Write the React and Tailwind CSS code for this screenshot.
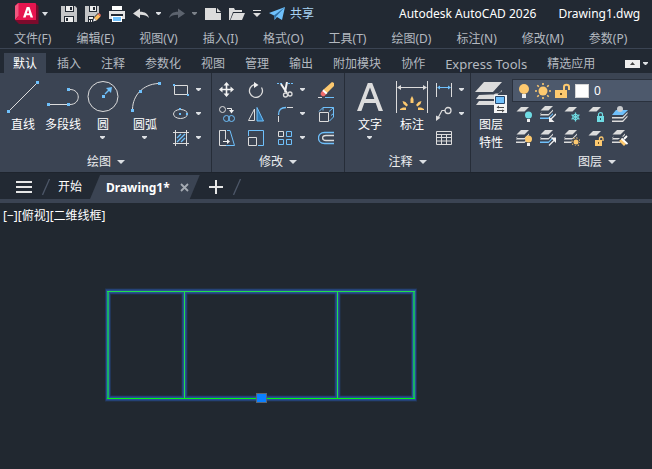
import React from "react";

const W = "#dcdcdc";
const B = "#6fc0fb";
const Y = "#fdc96f";
const T = "#6fdbe3";

function Svg({ w = 16, h = 16, children }) {
  return (
    <svg width={w} height={h} viewBox={`0 0 ${w} ${h}`} fill="none" aria-hidden="true" className="shrink-0">
      {children}
    </svg>
  );
}

function Caret({ big, dim }) {
  return big ? (
    <Svg w={8} h={4}>
      <path d="M0 0h8L4 4z" fill="#dcdfe3" />
    </Svg>
  ) : (
    <Svg w={6} h={4}>
      <path d="M0 0h5v1L3 3H2L0 1z" fill={dim ? "#7c828a" : "#dcdfe3"} />
    </Svg>
  );
}

/* ---------- quick access icons ---------- */

const Logo = () => (
  <Svg w={24} h={22}>
    <path d="M3 0h17a1 1 0 0 1 1 1v16H0V3z" fill="#e6154f" />
    <path d="M0 3 3.500 0v13L0 17z" fill="#f0577f" />
    <path d="M3.500 13 0 17l4 4h19.500V3L21 1v16H3.500z" fill="#7c0b2c" />
    <path d="M0 17 3.500 13H21v4z" fill="#e6154f" />
    <path d="M8 14.500 11.700 4h2.800l3.600 10.500h-2.600l-.7-2.300h-3.500l-.7 2.300zM11.900 10.300h2.300L13.100 6.500z" fill="#fff" />
  </Svg>
);
const Save = () => (
  <Svg>
    <path d="M0 0h14l2 2v14H0z" fill="#c4c5c7" />
    <path d="M4 0h9v6H4z" fill="#222933" />
    <path d="M5 0h7v5H5z" fill="#eee" />
    <path d="M9 1h2v3H9z" fill="#222933" />
    <path d="M3 10h10v6H3z" fill="#222933" />
    <path d="M4 11h8v5H4z" fill="#eee" />
    <path d="M5 12h2v3H5z" fill="#222933" />
  </Svg>
);
const SaveAs = () => (
  <Svg>
    <path d="M0 0h14v7l-6 6v3H0z" fill="#c4c5c7" />
    <path d="M4 0h8v6H4z" fill="#222933" />
    <path d="M5 0h6v5H5z" fill="#eee" />
    <path d="M8 1h2v3H8z" fill="#222933" />
    <path d="M3 10h6v6H3z" fill="#222933" />
    <path d="M4 11h4v2H4zM4 14h1v2H4zM6 14h1v2H6z" fill="#eee" />
    <path d="m7 16 1-4 5-5 3 3-5 5z" fill="#222933" />
    <path d="m9 12 4-4 2.500 2.500-4 4z" fill="#fdbd60" />
    <path d="m13 8 1-1 2 2-.8 1.500z" fill="#ef6a60" />
    <path d="m9 12 2.500 2.500L8 15.500z" fill="#eee" />
  </Svg>
);
const Print = () => (
  <Svg>
    <path d="M3 0h10v4H3z" fill="#fff" />
    <path d="M0 5h16v8H0z" fill="#e4e4e4" />
    <path d="M2 8h12v2H2z" fill="#222933" />
    <path d="M3 10h10v6H3z" fill="#fff" />
    <path d="M4 11h8v4H4z" fill="#6fc0fb" />
  </Svg>
);
const Undo = ({ flip, color }) => (
  <Svg>
    <g transform={flip ? "translate(16 0) scale(-1 1)" : undefined}>
      <path d="M0 7.500 7 2.500v3.200c5 0 8 2 9 6.300-2-2.500-4.500-3.200-9-3.200v3.500z" fill={color} />
    </g>
  </Svg>
);
const NewFile = () => (
  <Svg>
    <path d="M0 2h11v5h5v7H0z" fill="#dcdcdc" />
    <path d="m12 2 4 4h-4z" fill="#dcdcdc" />
  </Svg>
);
const Open = () => (
  <Svg>
    <path d="M0 2h5l1 2h7v2H4L1 14H0z" fill="#dcdcdc" />
    <path d="M4.500 7H16l-3 7H1.500z" fill="#dcdcdc" />
  </Svg>
);
const MoreTools = () => (
  <Svg w={8} h={8}>
    <path d="M0 0h8v1H0zM0 3h8L4 7z" fill="#dcdcdc" />
  </Svg>
);
const Send = () => (
  <Svg>
    <path d="M0 7 16 1 13 14 8 11 5.500 14 5 9.500z" fill={B} />
    <path d="M16 1 5 9.500l.5 4.500L7 10.500z" fill="#2c6da3" />
  </Svg>
);

/* ---------- draw panel ---------- */

const Sq = ({ x, y, s = 3, c = B }) => <rect x={x} y={y} width={s} height={s} fill={c} />;

const LineIcon = () => (
  <Svg w={32} h={32}>
    <path d="M3 29 29 3" stroke={W} />
    <Sq x={0} y={29} />
    <Sq x={29} y={0} />
  </Svg>
);
const PolyIcon = () => (
  <Svg w={32} h={32}>
    <path d="M3 23.500h17M23 8.500c11 0 11 15 0 15" stroke={W} />
    <Sq x={0} y={22} />
    <Sq x={20} y={22} />
    <Sq x={20} y={7} />
  </Svg>
);
const CircleIcon = () => (
  <Svg w={32} h={32}>
    <circle cx="16" cy="15.500" r="15" stroke={W} />
    <Sq x={15} y={14} />
    <path d="m18 13 4-4" stroke={B} strokeWidth="1.500" />
    <path d="m25 6-1 6-2-2-3-3z" fill={B} />
  </Svg>
);
const ArcIcon = () => (
  <Svg w={32} h={32}>
    <path d="M3.500 28C4 14 14 3.500 29 2.500" stroke={W} />
    <Sq x={2} y={28} />
    <Sq x={10} y={9} />
    <Sq x={29} y={1} />
  </Svg>
);
const RectIcon = () => (
  <Svg>
    <path d="M1.500 3.500h13v9h-13z" stroke={W} />
    <Sq x={0} y={2} s={2} />
    <Sq x={14} y={12} s={2} />
  </Svg>
);
const EllipseIcon = () => (
  <Svg>
    <ellipse cx="7.500" cy="8" rx="7" ry="4.500" stroke={W} />
    <Sq x={6} y={2} s={2} />
    <Sq x={6} y={7} s={2} />
    <Sq x={13} y={7} s={2} />
  </Svg>
);
const HatchIcon = () => (
  <Svg>
    <path d="M2.500 0v16M13.500 0v16M0 2.500h16M0 13.500h16" stroke={W} />
    <path d="m4 8 4-4M4 12l8-8M8 12l4-4" stroke={B} strokeWidth="1.300" />
  </Svg>
);

/* ---------- modify panel ---------- */

const MoveIcon = () => (
  <Svg>
    <path d="M7.500 2v11M2 7.500h11" stroke="#f2f2f2" strokeWidth="1.600" />
    <path d="M7.500 0l3 3.500h-6zM7.500 15l3-3.500h-6zM0 7.500l3.500-3v6zM15 7.500l-3.500-3v6z" fill="#f2f2f2" />
  </Svg>
);
const RotateIcon = () => (
  <Svg>
    <path d="M13.500 5.500A6.500 6.500 0 1 1 6 2.700" stroke={W} strokeWidth="1.300" />
    <path d="M6 0v6l4.500-3z" fill="#f2f2f2" />
  </Svg>
);
const TrimIcon = () => (
  <Svg>
    <path d="M0 1.500h6M11 1.500h5" stroke={B} strokeDasharray="2 1" />
    <path d="m4 2 6 9M10 0 8 10" stroke="#f2f2f2" strokeWidth="2" />
    <circle cx="8.500" cy="13" r="2" stroke={W} strokeWidth="1.300" />
    <circle cx="13" cy="12" r="2" stroke={W} strokeWidth="1.300" />
  </Svg>
);
const EraseIcon = () => (
  <Svg>
    <path d="M5 8 14 0l2 1v3L8 12z" fill={Y} />
    <path d="m4.500 8.500 4 3.500-2 2c-2 1-5-1-3.500-3.500z" fill="#f06a6a" />
    <path d="m5.500 7.500 4 3.500-1.500 1.200-3.700-3.200z" fill="#fff" />
    <path d="M0 15.500h4" stroke={W} />
    <path d="M7 15.500h9" stroke={B} />
  </Svg>
);
const CopyIcon = () => (
  <Svg>
    <circle cx="3.500" cy="3.500" r="3" stroke={W} />
    <path d="M8 2.500h4.500V5" stroke="#f2f2f2" />
    <path d="M10 4h5l-2.500 3.500z" fill="#f2f2f2" />
    <circle cx="7.500" cy="12.500" r="3" stroke={B} />
    <circle cx="12.500" cy="12.500" r="3" stroke={B} />
  </Svg>
);
const MirrorIcon = () => (
  <Svg>
    <path d="M6.500 3v11.500h-6z" stroke={W} />
    <path d="M9 1.500 15.500 15H9z" fill="#2f78b0" stroke={B} />
  </Svg>
);
const FilletIcon = () => (
  <Svg>
    <path d="M1.500 9C1.500 4 4 1.500 9 1.500" stroke={B} strokeWidth="1.300" />
    <path d="M10 1.500h6M1.500 10v6" stroke={W} />
  </Svg>
);
const BoxIcon = () => (
  <Svg>
    <path d="M1 5.500 5 1.500h10.500V11l-4 4M5 1.500v3M11 5.500l4.500-4M13 9.500l2.500-2" stroke={B} />
    <path d="M1.500 6.500h9v9h-9z" stroke={W} />
  </Svg>
);
const StretchIcon = () => (
  <Svg>
    <path d="M7 .5H.5v15H7M6.500.5v9" stroke={W} />
    <path d="M8 .5h3l4.500 15H7" stroke={B} />
    <path d="M4 11.500h5" stroke="#f2f2f2" />
    <path d="m8 9 3 2.500L8 14z" fill="#f2f2f2" />
  </Svg>
);
const ScaleIcon = () => (
  <Svg>
    <path d="M.5 6V.5h15v15H10" stroke={B} />
    <path d="M.5 7.500h8v8h-8z" stroke={W} />
  </Svg>
);
const ArrayIcon = () => (
  <Svg>
    <path d="M1.500 1.500h5v5h-5z" stroke={W} />
    <path d="M9.500 1.500h5v5h-5zM1.500 9.500h5v5h-5zM9.500 9.500h5v5h-5z" stroke={B} />
  </Svg>
);
const OffsetIcon = () => (
  <Svg>
    <path d="M16 2.500H6.500C-1.500 2.500-1.500 13.500 6.500 13.500H16" stroke={B} strokeWidth="1.300" />
    <path d="M16 5.500H8C3.500 5.500 3.500 10.500 8 10.500H16" stroke={W} strokeWidth="1.300" />
  </Svg>
);

/* ---------- annotate panel ---------- */

const TextIcon = () => (
  <Svg w={26} h={32}>
    <path d="M0 30 10.800 2h4.400L26 30h-4.400l-2.900-8H7.300l-2.900 8zM8.700 18h8.600L13 6.500z" fill={W} />
  </Svg>
);
const DimIcon = () => (
  <Svg w={32} h={32}>
    <path d="M.5 0v32M31.500 0v32M3 6.500h26" stroke={W} />
    <path d="m1 6.500 4-2.500v5zM31 6.500 27 4v5z" fill={W} />
    <path
      d="m16 15 1.500 3v4h-3v-4zM6.500 20l3 1 2.500 3-1.500 1.500-3-2.500zM25.500 20l-3 1-2.500 3 1.500 1.500 3-2.500zM4 28l3-1.500h3V29H4zM28 28l-3-1.500h-3V29h6z"
      fill={Y}
    />
  </Svg>
);
const LinearIcon = () => (
  <Svg>
    <path d="M.5 1v14M15.500 1v14" stroke={W} />
    <path d="M2 5.500h12" stroke={B} />
    <path d="m1 5.500 3-2v4zM15 5.500l-3-2v4z" fill={B} />
  </Svg>
);
const LeaderIcon = () => (
  <Svg>
    <circle cx="12" cy="4.500" r="3" stroke={W} strokeWidth="1.300" />
    <path d="M9 4.500H6L2 12" stroke={W} strokeWidth="1.200" />
    <path d="M0 15V9.500l4.500 2.300z" fill={W} />
  </Svg>
);
const TableIcon = () => (
  <Svg>
    <path d="M.5 1.500h15v13H.5zM0 4.500h16M0 7.500h16M0 11h16M5.500 5v9M10.500 5v9" stroke={W} />
  </Svg>
);

/* ---------- layer panel ---------- */

const Sheet = ({ y = 0, c = W }) => <path d={`M5 ${y}h8l-4.500 4.500h-8z`} fill={c} />;
const Stack = ({ last = W }) => (
  <>
    <Sheet y={0} />
    <path d="m2 6-2 2h8.500L13 3.500V5L8.500 9.500H0" fill={W} />
    <path d="m2 9.500-2 2h8.500L13 7v1.500L8.500 13H0v-1.500" fill={last} />
  </>
);
const Bulb = ({ c }) => (
  <>
    <circle cx="12.500" cy="9" r="3.500" fill={c} />
    <path d="M11 13h3v3h-3z" fill="#eee" />
  </>
);
const LayerOff = () => (
  <Svg>
    <Sheet y={1} />
    <Bulb c={T} />
  </Svg>
);
const LayerIso = () => (
  <Svg>
    <Stack last={B} />
    <path d="m16 8-5 5" stroke="#f2f2f2" strokeWidth="1.300" />
    <path d="M9 10.500V16h5.500z" fill="#f2f2f2" />
  </Svg>
);
const LayerFreeze = () => (
  <Svg>
    <Sheet y={1} />
    <path d="M11.500 6.500v9M7.500 8.700l8 4.600M15.500 8.700l-8 4.600" stroke={T} strokeWidth="1.300" />
    <circle cx="11.500" cy="11" r="2.800" stroke={T} />
  </Svg>
);
const LayerLock = () => (
  <Svg>
    <Sheet y={1} />
    <path d="M9 10h7v6H9z" fill={T} />
    <path d="M10.500 10V8.500c0-2.500 4-2.500 4 0V10" stroke={T} strokeWidth="1.200" />
    <path d="M12 12h1v2h-1z" fill="#24505a" />
  </Svg>
);
const LayerCurrent = () => (
  <Svg>
    <path d="M4 4h12l-5 5H0z" fill={B} />
    <path d="M0 11h10.500L15.500 6v1.500l-4.500 5H0zM0 14.500h10.500l5-5V11L11 16H0z" fill={W} />
    <circle cx="8" cy="3" r="3" fill="#c9cbce" />
  </Svg>
);
const LayerOn = () => (
  <Svg>
    <Stack />
    <Bulb c={Y} />
  </Svg>
);
const LayerUniso = () => (
  <Svg>
    <Stack last={B} />
    <path d="m9 15.500 5-5" stroke="#f2f2f2" strokeWidth="1.300" />
    <path d="M16 13V7.500h-5.500z" fill="#f2f2f2" />
  </Svg>
);
const LayerThaw = () => (
  <Svg>
    <Stack />
    <circle cx="12" cy="12" r="4.500" fill="#3b4453" />
    <circle cx="12" cy="12" r="2.500" fill={Y} />
    <circle cx="12" cy="12" r="4" stroke={Y} strokeWidth="1.200" strokeDasharray="1.100 2.040" />
  </Svg>
);
const LayerUnlock = () => (
  <Svg>
    <Sheet y={1} />
    <path d="M7 10h7v6H7z" fill={Y} />
    <path d="M11.500 10V8.500c0-2 3.500-2 3.500 0V11" stroke={Y} strokeWidth="1.300" />
    <path d="M10 12h1v2h-1z" fill="#6b5126" />
  </Svg>
);
const LayerMatch = () => (
  <Svg>
    <Stack />
    <path d="m6 10 4-4 6 6-4 4z" fill="#3b4453" />
    <path d="m7 11 3-2.500 5 4.500-3 3z" fill={Y} />
    <path d="m9.500 8.500 6 5.500M12 9l3-3" stroke="#fff" strokeWidth="1.800" />
  </Svg>
);
const LayerPropsIcon = () => (
  <Svg w={32} h={32}>
    <path d="M9 1h18L18 11H0z" fill={W} />
    <path d="m4 14-3 4h18l8-9v3" fill={W} />
    <path d="m4 20-3 4h18l8-9v3" fill={W} />
    <path d="M0 12.500h18.500L27 3.500" stroke="#3b4453" strokeWidth="2" />
    <path d="M0 19h19.500L27 11" stroke="#3b4453" strokeWidth="2" />
    <path d="M19 14h13v18H19z" fill="#f4f4f4" />
    <path d="M20.500 15.500h9v7h-9z" fill={B} stroke="#26466b" />
    <path d="M22 26.500h7M22 29.500h7" stroke="#4a4a4a" />
    <path d="m24 24.500-2.500 2 2.500 1zM27 31.500l2.500-2-2.500-1z" fill="#4a4a4a" />
  </Svg>
);

/* ---------- building blocks ---------- */

function Tool({ name, icon: Icon }) {
  return (
    <button type="button" aria-label={name} className="flex h-6 w-6 shrink-0 items-center justify-center">
      <Icon />
    </button>
  );
}

function Drop({ name, wide, dim }) {
  return (
    <button
      type="button"
      aria-label={name}
      className={wide ? "flex h-6 w-4 shrink-0 items-center justify-center" : "flex h-6 w-3 shrink-0 items-center justify-center"}
    >
      {wide ? <MoreTools /> : <Caret dim={dim} />}
    </button>
  );
}

function BigTool({ label, icon: Icon, drop, wide }) {
  return (
    <button
      type="button"
      className={wide ? "flex h-[72px] w-10 shrink-0 flex-col items-center pt-[3px]" : "flex h-[72px] w-9 shrink-0 flex-col items-center pt-[3px]"}
    >
      <Icon />
      <span className="whitespace-pre-line pt-[3px] text-center leading-[18px] text-white">{label}</span>
      {drop && (
        <span className="pt-0.5">
          <Caret />
        </span>
      )}
    </button>
  );
}

function Panel({ title, last, children }) {
  return (
    <section
      className={
        last
          ? "flex w-[252px] shrink-0 flex-col pt-[5px]"
          : "flex shrink-0 flex-col border-r border-[#262d38] pt-[5px]"
      }
    >
      <div className="flex h-[72px]">{children}</div>
      <button type="button" className="flex h-[22px] items-center justify-center gap-1.5 pt-0.5 leading-5 text-[#eceef0]">
        {title}
        <Caret big />
      </button>
    </section>
  );
}

const menus = ["文件(F)", "编辑(E)", "视图(V)", "插入(I)", "格式(O)", "工具(T)", "绘图(D)", "标注(N)", "修改(M)", "参数(P)"];
const tabs = ["插入", "注释", "参数化", "视图", "管理", "输出", "附加模块", "协作", "Express Tools", "精选应用"];

function TitleBar() {
  return (
    <header className="flex h-7 items-center whitespace-nowrap pl-[15px]">
      <button type="button" aria-label="A" className="shrink-0">
        <Logo />
      </button>
      <button type="button" aria-label="应用程序菜单" className="flex h-6 w-3 shrink-0 items-center justify-center">
        <Svg w={6} h={4}>
          <path d="M0 0h6L3 4z" fill="#dcdfe3" />
        </Svg>
      </button>
      <div className="flex items-center pl-1.5">
        <Tool name="保存" icon={Save} />
        <Tool name="另存为" icon={SaveAs} />
        <Tool name="打印" icon={Print} />
        <Tool name="放弃" icon={() => <Undo color="#dcdcdc" />} />
        <Drop name="放弃列表" />
        <Tool name="重做" icon={() => <Undo flip color="#5c636e" />} />
        <Drop name="重做列表" dim />
        <Tool name="新建" icon={NewFile} />
        <Tool name="打开" icon={Open} />
        <Drop name="自定义" wide />
        <button type="button" className="flex items-center gap-[5px] pl-1 text-[#a9d4f5]">
          <Send />
          共享
        </button>
      </div>
      <h1 className="flex gap-[22px] pl-[85px] text-[12px] text-white">
        <span>Autodesk AutoCAD 2026</span>
        <span>Drawing1.dwg</span>
      </h1>
    </header>
  );
}

function Ribbon() {
  return (
    <div className="flex h-[99px] bg-[#3b4453] pl-px">
      <Panel title="绘图">
        <div className="flex gap-1 pl-1">
          <BigTool label="直线" icon={LineIcon} />
          <BigTool label="多段线" icon={PolyIcon} />
          <BigTool label="圆" icon={CircleIcon} drop />
          <BigTool label="圆弧" icon={ArcIcon} drop wide />
        </div>
        <div className="grid grid-cols-[24px_12px] pr-1.5 pl-1">
          <Tool name="矩形" icon={RectIcon} />
          <Drop name="矩形列表" />
          <Tool name="椭圆" icon={EllipseIcon} />
          <Drop name="椭圆列表" />
          <Tool name="图案填充" icon={HatchIcon} />
          <Drop name="图案填充列表" />
        </div>
      </Panel>

      <Panel title="修改">
        <div className="grid grid-cols-[29px_29px_24px_17px_24px] pr-1.5 pl-[3px]">
          <Tool name="移动" icon={MoveIcon} />
          <Tool name="旋转" icon={RotateIcon} />
          <Tool name="修剪" icon={TrimIcon} />
          <Drop name="修剪列表" />
          <Tool name="删除" icon={EraseIcon} />
          <Tool name="复制" icon={CopyIcon} />
          <Tool name="镜像" icon={MirrorIcon} />
          <Tool name="圆角" icon={FilletIcon} />
          <Drop name="圆角列表" />
          <Tool name="分解" icon={BoxIcon} />
          <Tool name="拉伸" icon={StretchIcon} />
          <Tool name="缩放" icon={ScaleIcon} />
          <Tool name="阵列" icon={ArrayIcon} />
          <Drop name="阵列列表" />
          <Tool name="偏移" icon={OffsetIcon} />
        </div>
      </Panel>

      <Panel title="注释">
        <div className="flex gap-1 pl-[7px]">
          <BigTool label="文字" icon={TextIcon} drop />
          <BigTool label="标注" icon={DimIcon} wide />
        </div>
        <div className="grid grid-cols-[24px_12px] pr-0.5">
          <Tool name="线性" icon={LinearIcon} />
          <Drop name="线性列表" />
          <Tool name="引线" icon={LeaderIcon} />
          <Drop name="引线列表" />
          <Tool name="表格" icon={TableIcon} />
        </div>
      </Panel>

      <Panel title="图层" last>
        <BigTool label={"图层\n特性"} icon={LayerPropsIcon} wide />
        <div className="flex-1 pl-px pt-px">
          <div className="flex h-[23px] items-center border border-[#2a313d] bg-[#4d596c] pl-1.5">
            <Svg w={10} h={16}>
              <circle cx="5" cy="6" r="5" fill={Y} />
              <path d="M3 11h4v4H3z" fill="#eee" />
            </Svg>
            <div className="pl-1.5">
              <Svg>
                <circle cx="8" cy="8" r="4.500" fill={Y} />
                <path
                  d="M8 0v2M8 14v2M0 8h2M14 8h2M2.300 2.300l1.500 1.500M12.200 12.200l1.500 1.500M2.300 13.700l1.500-1.500M12.200 3.800l1.500-1.500"
                  stroke={Y}
                  strokeWidth="1.600"
                />
              </Svg>
            </div>
            <div className="pl-1">
              <Svg>
                <path d="M0 7h12v8H0z" fill={Y} />
                <path d="M9 7V4c0-3 5-3 5 0v3" stroke={Y} strokeWidth="2" />
                <path d="M5 10h2v2H5z" fill="#6b5126" />
              </Svg>
            </div>
            <span className="ml-1 h-[14px] w-[14px] shrink-0 border border-[#d5d5d5] bg-white" />
            <select
              aria-label="图层"
              defaultValue="0"
              className="ml-[5px] flex-1 appearance-none bg-transparent text-[12px] text-white outline-none"
            >
              <option value="0">0</option>
            </select>
          </div>
          <div className="grid grid-cols-[repeat(5,24px)]">
            <Tool name="关" icon={LayerOff} />
            <Tool name="隔离" icon={LayerIso} />
            <Tool name="冻结" icon={LayerFreeze} />
            <Tool name="锁定" icon={LayerLock} />
            <Tool name="置为当前" icon={LayerCurrent} />
            <Tool name="打开所有图层" icon={LayerOn} />
            <Tool name="取消隔离" icon={LayerUniso} />
            <Tool name="解冻" icon={LayerThaw} />
            <Tool name="解锁" icon={LayerUnlock} />
            <Tool name="匹配图层" icon={LayerMatch} />
          </div>
        </div>
      </Panel>
    </div>
  );
}

const Slash = () => (
  <Svg w={8} h={16}>
    <path d="M.5 16 7.500 0" stroke="#4d5768" strokeWidth="1.300" />
  </Svg>
);

function FileTabs() {
  return (
    <nav className="flex h-[27px] items-end border-t border-[#1e242d] pl-4">
      <button type="button" aria-label="菜单" className="flex h-6 items-center">
        <Svg w={16} h={12}>
          <path d="M0 1h16M0 6h16M0 11h16" stroke="#e6e6e6" strokeWidth="2" />
        </Svg>
      </button>
      <div className="flex h-6 items-center gap-2 pl-[10px] text-white">
        <Slash />
        <button type="button">开始</button>
      </div>
      <div className="ml-2 flex h-6 items-center gap-[10px] bg-[#3b4453] pr-[11px] pl-4 text-[12px] font-bold text-white [clip-path:polygon(10px_0,100%_0,calc(100%-10px)_100%,0_100%)]">
        <button type="button" className="pt-0.5">
          Drawing1*
        </button>
        <button type="button" aria-label="关闭">
          <Svg w={9} h={9}>
            <path d="m1 1 7 7M8 1 1 8" stroke="#a5abb3" strokeWidth="1.800" />
          </Svg>
        </button>
      </div>
      <div className="flex h-6 items-center gap-[10px] pl-[9px]">
        <button type="button" aria-label="新建图形">
          <Svg w={14} h={14}>
            <path d="M7 0v14M0 7h14" stroke="#e6e6e6" strokeWidth="2" />
          </Svg>
        </button>
        <Slash />
      </div>
    </nav>
  );
}

function Drawing() {
  return (
    <svg width="316" height="118" viewBox="0 0 316 118" fill="none" role="img" aria-label="图形">
      <path d="M4 4.500H310V111.500H4zM80.500 4V111M233.500 4V111" stroke="#25417a" strokeWidth="6" strokeOpacity=".55" />
      <path d="M4 4.500H310V111.500H4zM80.500 4V111M233.500 4V111" stroke="#2a54a0" strokeWidth="4" strokeOpacity=".85" />
      <path d="M4 4V112M310 4V112" stroke="#19b066" strokeWidth="2" />
      <path d="M3 4.500H311M80.500 4V112M233.500 4V112" stroke="#22e04a" />
      <path d="M3 111.500H311" stroke="#00fa10" />
      <rect x="152.500" y="106.500" width="10" height="9" fill="#0a80ff" stroke="#5c6673" />
    </svg>
  );
}

export default function App() {
  return (
    <div className="flex min-h-screen flex-col overflow-hidden bg-[#222933] font-['Noto_Sans','Noto_Sans_CJK_SC',sans-serif] text-[12px] leading-4 text-[#b4b9c0]">
      <TitleBar />
      <nav className="flex h-[21px] items-center gap-[25px] whitespace-nowrap border-b border-[#3b4453] pt-0.5 pl-[14px]">
        {menus.map((m) => (
          <button type="button" key={m} className="shrink-0">
            {m}
          </button>
        ))}
      </nav>
      <nav className="flex h-6 items-end whitespace-nowrap pl-1">
        <button type="button" className="h-5 shrink-0 bg-[#3b4453] px-[9px] pt-0.5 text-white">
          默认
        </button>
        <div className="flex h-5 shrink-0 items-center gap-5 pt-0.5 pl-[11px]">
          {tabs.map((t) => (
            <button type="button" key={t} className={t === "Express Tools" ? "text-[13px]" : ""}>
              {t}
            </button>
          ))}
        </div>
        <div className="flex h-5 shrink-0 items-center pt-0.5 pl-[30px]">
          <button type="button" aria-label="最小化功能区" className="flex h-2 w-[15px] items-center justify-center bg-[#eee]">
            <Svg w={5} h={4}>
              <path d="M0 3h5L2.500 0z" fill="#444" />
            </Svg>
          </button>
          <Drop name="功能区选项" />
        </div>
      </nav>
      <Ribbon />
      <FileTabs />
      <main className="flex-1 border-t-4 border-[#3b4453] bg-[#212830]">
        <p className="pt-[5px] pl-[3px] text-white">[−][俯视][二维线框]</p>
        <div className="pt-[63px] pl-[104px]">
          <Drawing />
        </div>
      </main>
    </div>
  );
}
